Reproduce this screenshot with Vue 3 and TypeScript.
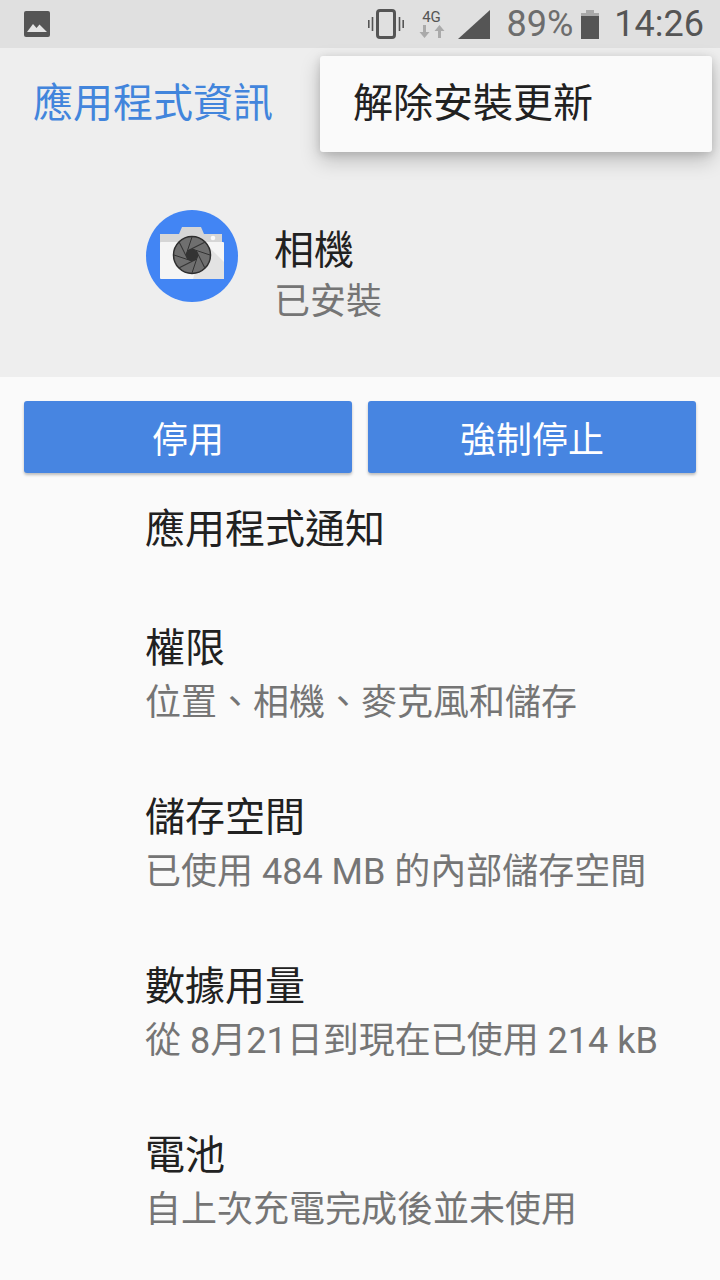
<script setup lang="ts">
interface Row {
  title: string
  summary?: string
}

const rows: Row[] = [
  { title: '應用程式通知' },
  { title: '權限', summary: '位置、相機、麥克風和儲存' },
  { title: '儲存空間', summary: '已使用 484 MB 的內部儲存空間' },
  { title: '數據用量', summary: '從 8月21日到現在已使用 214 kB' },
  { title: '電池', summary: '自上次充電完成後並未使用' },
]

const blades = [0, 45, 90, 135, 180, 225, 270, 315]
</script>

<template>
  <div class="screen">
    <div class="status-bar">
      <svg class="st-image" width="26" height="26" viewBox="0 0 26 26">
        <rect x="0" y="0" width="26" height="26" rx="2" fill="#555" />
        <path d="M3 21l6-8 3.5 4 3-3.5L23 21z" fill="#e4e4e4" />
      </svg>
      <div class="status-right">
        <svg class="st-vibrate" width="36" height="30" viewBox="0 0 36 30" fill="none" stroke="#555">
          <rect x="9.5" y="1.5" width="17" height="27" rx="2.5" stroke-width="3" />
          <path d="M4.5 8v14M.8 11v8M31.5 8v14M35.2 11v8" stroke-width="1.6" />
        </svg>
        <div class="net">
          <span class="net-label">4G</span>
          <svg width="26" height="13" viewBox="0 0 26 13" fill="#aaa">
            <path d="M4 0h3v7h3.500L5.500 13 .5 7H4zM19 13h3V6h3.500L20.500 0l-5 6H19z" />
          </svg>
        </div>
        <svg class="st-signal" width="32" height="29" viewBox="0 0 32 29">
          <path d="M32 0v29H0z" fill="#555" />
        </svg>
        <span class="battery-pct">89%</span>
        <svg class="st-battery" width="18" height="29" viewBox="0 0 18 29">
          <path d="M5 0h8v3h5v3H0V3h5z" fill="#aaa" />
          <rect y="6" width="18" height="23" fill="#555" />
        </svg>
        <span class="clock">14:26</span>
      </div>
    </div>

    <header class="app-header">
      <div class="page-title">應用程式資訊</div>
      <div class="app-info">
        <svg class="app-icon" width="94" height="96" viewBox="0 0 94 96">
          <circle cx="47" cy="47" r="46" fill="#4285f4" />
          <path d="M2 50a46 46 0 0 0 90 0a46 46 0 0 1-90 0z" fill="#3b78dc" />
          <path d="M16 26h19l3-7h19l3 7h18v37H16z" transform="translate(-1 -1)" fill="#d6d6d6" />
          <rect x="15" y="33" width="64" height="37" rx="1" fill="#f5f5f5" />
          <path d="M59 33l20 20v17H48z" fill="#e3e3e3" />
          <circle cx="68" cy="29" r="2.300" fill="#fafafa" />
          <circle cx="47" cy="46" r="18.500" fill="#6f6f6f" stroke="#2e2e2e" stroke-width="1.500" />
          <g stroke="#333" stroke-width="1">
            <line
              v-for="deg in blades"
              :key="deg"
              x1="47"
              y1="28"
              x2="41"
              y2="46"
              :transform="`rotate(${deg} 47 46)`"
            />
          </g>
          <circle cx="47" cy="46" r="6" fill="#333" />
        </svg>
        <div class="app-text">
          <div class="app-name">相機</div>
          <div class="app-state">已安裝</div>
        </div>
      </div>
    </header>

    <div class="actions">
      <button class="action-btn">停用</button>
      <button class="action-btn">強制停止</button>
    </div>

    <div class="list">
      <div v-for="row in rows" :key="row.title" class="row">
        <div class="row-title">{{ row.title }}</div>
        <div v-if="row.summary" class="row-summary">{{ row.summary }}</div>
      </div>
    </div>

    <div class="menu">解除安裝更新</div>
  </div>
</template>

<style>
html,
body {
  margin: 0;
  background: #fafafa;
}
</style>

<style scoped>
.screen {
  position: relative;
  width: 720px;
  height: 1280px;
  overflow: hidden;
  background: #fafafa;
  font-family: Roboto, 'Noto Sans CJK TC', sans-serif;
}

.status-bar {
  height: 48px;
  box-sizing: border-box;
  padding: 0 16px 0 24px;
  background: #e0e0e0;
  display: flex;
  align-items: center;
  justify-content: space-between;
}

.status-right {
  display: flex;
  align-items: center;
}

.st-vibrate {
  margin-right: 13px;
}

.net {
  width: 30px;
  margin-right: 11px;
  display: flex;
  flex-direction: column;
  align-items: center;
}

.net-label {
  font-size: 15px;
  line-height: 15px;
  color: #555;
}

.st-signal {
  margin-right: 17px;
}

.battery-pct {
  font-size: 36px;
  line-height: 48px;
  color: #6d6d6d;
  margin-right: 8px;
}

.st-battery {
  margin-right: 15px;
}

.clock {
  font-size: 36px;
  line-height: 48px;
  color: #555;
}

.app-header {
  height: 329px;
  box-sizing: border-box;
  background: #eeeeee;
  padding: 30px 33px 0;
}

.page-title {
  font-size: 40px;
  line-height: 52px;
  color: #4285dc;
}

.app-info {
  margin-top: 79px;
  margin-left: 112px;
  display: flex;
  align-items: flex-start;
}

.app-icon {
  flex: none;
}

.app-text {
  margin-left: 35px;
  margin-top: 16px;
}

.app-name {
  font-size: 40px;
  line-height: 52px;
  color: #212121;
}

.app-state {
  font-size: 36px;
  line-height: 50px;
  color: #757575;
}

.actions {
  padding: 24px 24px 0;
  display: grid;
  grid-template-columns: 1fr 1fr;
  gap: 16px;
}

.action-btn {
  height: 72px;
  padding: 0;
  border: none;
  border-radius: 3px;
  background: #4785e1;
  color: #fff;
  font-family: inherit;
  font-size: 36px;
  box-shadow: 0 2px 3px rgba(0, 0, 0, 0.25);
}

.list {
  padding: 28px 24px 0 145px;
}

.row {
  height: 169px;
}

.row:first-child {
  height: 119px;
}

.row-title {
  font-size: 40px;
  line-height: 58px;
  color: #212121;
}

.row-summary {
  font-size: 36px;
  line-height: 50px;
  color: #757575;
  white-space: nowrap;
}

.menu {
  position: absolute;
  top: 56px;
  left: 320px;
  width: 392px;
  height: 96px;
  box-sizing: border-box;
  padding-left: 33px;
  border-radius: 3px;
  background: #fafafa;
  color: #212121;
  font-size: 40px;
  line-height: 96px;
  box-shadow: 0 8px 20px rgba(0, 0, 0, 0.22), 0 2px 8px rgba(0, 0, 0, 0.12);
}
</style>
